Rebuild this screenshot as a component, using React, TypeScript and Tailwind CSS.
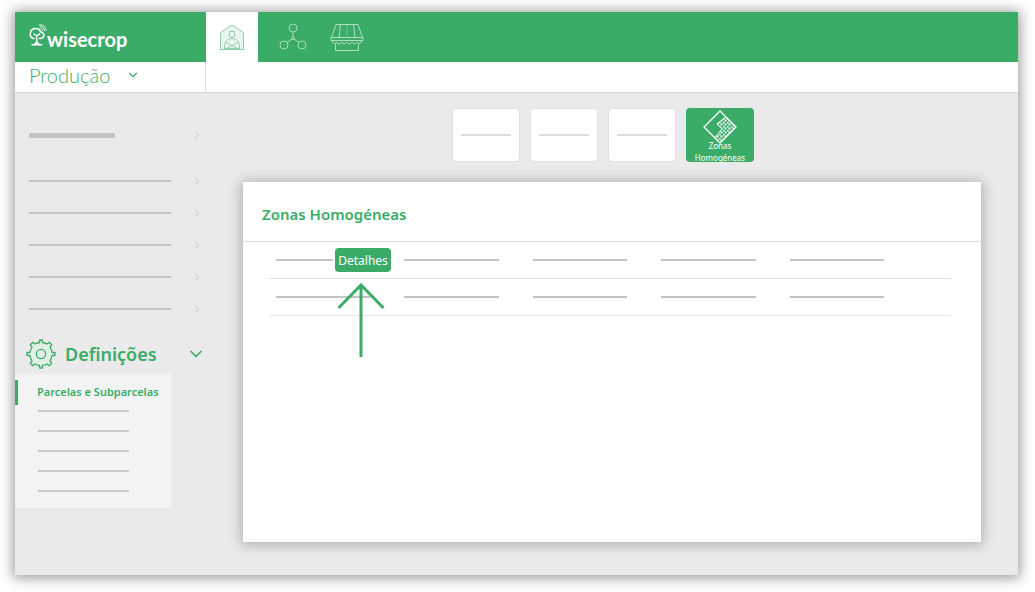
import { ChevronDown, ChevronRight } from 'lucide-react';

const menuRows = [1, 2, 3, 4, 5];
const subRows = [1, 2, 3, 4, 5];
const cards = [1, 2, 3];
const columns = [1, 2, 3, 4, 5];

function Logo() {
  return (
    <a href="#" className="flex items-start text-white" aria-label="wisecrop">
      <svg width="18" height="24" viewBox="0 0 18 24" fill="none" stroke="currentColor" strokeLinecap="round" strokeLinejoin="round">
        <path d="M5 14.500H4C1.800 13.800.6 11.500 1.500 9.200 1.300 6.200 4 4.200 7.300 4.500 9.600 4.700 11.200 6 11.600 7.900 14 8.300 15.300 10 14.800 12 14.300 14 12.500 14.600 10.200 14.400" strokeWidth="1.500" />
        <path d="M5 10L7.700 11.800 10.800 9.800M7.700 11.800V20.400M3 20.700L5.500 20.500 7.700 17.500 10 20.500 12.700 20.700M3 20.700H12.700" strokeWidth="1.400" />
        <path d="M11 3.900C12.600 4 13.800 5.200 13.900 6.800M10.800 2C13.500 2 15.500 4 15.600 6.600M10.700.6C14.500.6 17 3.200 17.200 6.400" strokeWidth=".8" />
      </svg>
      <span className="pt-[3px] font-['Lato'] text-[20px] leading-6 font-bold">wisecrop</span>
    </a>
  );
}

function BarnIcon() {
  return (
    <svg width="24" height="26" viewBox="0 0 24 26" fill="none" stroke="#8fd0a9">
      <path d="M.5 25.500V8.500L12 1l11.500 7.500v17z" fill="#e9f5ee" />
      <path d="M9.500 7.500h5v5q-2.500 2-5 0z" />
      <path d="M4.500 24.500v-3c.5-4 3.500-7 7.500-7s7 3 7.500 7v3M6 18.500l11.500 6M18 18.500l-11.500 6M4 24.500h16" />
    </svg>
  );
}

function NetworkIcon() {
  return (
    <svg width="28" height="28" viewBox="0 0 28 28" fill="none" stroke="#a5dbb9">
      <circle cx="14" cy="5" r="4" />
      <circle cx="5" cy="22" r="4" />
      <circle cx="23" cy="22" r="4" />
      <path d="M14 9v5M12.500 16.500L8 19.500M15.500 16.500l4.500 3M14 13.500l2 3h-4z" />
    </svg>
  );
}

function MarketIcon() {
  return (
    <svg width="34" height="28" viewBox="0 0 34 28" fill="none" stroke="#b0dfc2">
      <path d="M6 1.500h22L32.500 14.500h-31zM10.500 1.500L9 14.500M23.500 1.500L25 14.500" />
      <path d="M17 1.500v13" opacity=".5" />
      <path d="M1 14.500h32v3H1z" />
      <path d="M2 17.500q2 5 5 1.500 1.500 5 5 0 2 4 5 0 2 4 5 0 2 4 5 0 3 3.500 5-1.500M5.500 21v6.500h23V21" />
    </svg>
  );
}

function GearIcon() {
  return (
    <svg width="30" height="30" viewBox="0 0 30 30" fill="#e2f0e4" stroke="#3bac68" strokeWidth="1.300" strokeLinejoin="round">
      <path d="M13.600 1h2.800v2.500Q19 3.800 21 5l2.200-1.700 2.500 2.500L24 8q1.600 2.500 2 5.500h3v3h-3q-.4 3-2 5.500l1.700 2.200-2.500 2.500L21 25q-2 1.200-4.600 1.500V29h-2.800v-2.500Q11 26.200 9 25l-2.200 1.700-2.500-2.500L6 22q-1.600-2.500-2-5.500H1v-3h3Q4.400 10.500 6 8L4.300 5.800l2.500-2.500L9 5q2-1.200 4.600-1.500z" />
      <circle cx="15" cy="15" r="4.600" fill="#eaeaea" />
    </svg>
  );
}

function ZonesIcon() {
  return (
    <svg width="34" height="34" viewBox="0 0 34 34" fill="none" stroke="white" className="shrink-0">
      <defs>
        <pattern id="dots" width="4" height="4" patternUnits="userSpaceOnUse">
          <rect width="1" height="1" fill="white" />
          <rect x="2" y="2" width="1" height="1" fill="white" />
        </pattern>
      </defs>
      <path d="M22.500 7L33 17 17 33l-5-5.500 7-8.500-5-5z" fill="url(#dots)" />
      <path d="M17 1L33 17 17 33 1 17z" strokeWidth="1.300" />
    </svg>
  );
}

function Arrow() {
  return (
    <svg className="absolute top-[35px] left-[61px] z-10" width="48" height="74" viewBox="0 0 48 74" fill="none" stroke="#3bac68" strokeWidth="3">
      <path d="M24 2v72M1.500 25L24 2l22.500 23" />
    </svg>
  );
}

export default function App() {
  return (
    <div className="flex min-h-screen bg-white pt-3 pr-[17px] pb-[17px] pl-[15px] font-['Noto_Sans',sans-serif] text-[#3bac68]">
      <div className="flex flex-1 flex-col bg-[#eaeaea] shadow-[0_1px_12px_2px_rgba(0,0,0,0.4)]">
        <header>
          <div className="flex h-[50px] bg-[#3bac68]">
            <div className="flex w-[191px] items-center pl-[14px]">
              <Logo />
            </div>
            <nav className="flex">
              <button className="flex w-[52px] items-center justify-center bg-white" aria-label="Produção">
                <BarnIcon />
              </button>
              <button className="ml-2 flex w-[54px] items-center justify-center" aria-label="Rede">
                <NetworkIcon />
              </button>
              <button className="flex w-[54px] items-center justify-center" aria-label="Mercado">
                <MarketIcon />
              </button>
            </nav>
          </div>
          <div className="flex h-[31px] border-b border-[#d8d8d8] bg-white">
            <button className="flex w-[191px] items-center gap-4 border-r border-[#dedede] pb-1 pl-[14px]">
              <span className="font-['Lato'] text-[20px] leading-6 font-light">Produção</span>
              <ChevronDown size={14} />
            </button>
          </div>
        </header>

        <div className="flex flex-1">
          <aside className="w-[191px] shrink-0 pt-[34px]">
            <button className="mb-[22px] flex h-4 w-full items-center justify-between pr-[2px] pl-[14px]" aria-label="Menu">
              <span className="h-[5px] w-[86px] bg-[#c3c3c3]" />
              <ChevronRight size={14} strokeWidth={1.5} className="text-[#bdbdbd]" />
            </button>
            {menuRows.map((row) => (
              <button key={row} className="flex h-8 w-full items-center justify-between pr-[2px] pl-[14px]" aria-label={`Menu ${row}`}>
                <span className="h-[2px] w-[142px] bg-[#c3c3c3]" />
                <ChevronRight size={14} strokeWidth={1.5} className="text-[#bdbdbd]" />
              </button>
            ))}

            <button className="mt-[9px] flex h-10 w-full items-center gap-[9px] pl-[11px]">
              <GearIcon />
              <span className="flex-1 text-left text-[18px] leading-6 font-semibold">Definições</span>
              <ChevronDown size={20} />
            </button>
            <div className="mr-[35px] h-[134px] bg-[#f3f3f3] pt-[6px]">
              <a href="#" className="flex h-[25px] items-center border-l-3 border-[#3bac68] pl-[19px] text-[11px] font-semibold whitespace-nowrap">
                Parcelas e Subparcelas
              </a>
              <div className="mt-[5px] flex flex-col gap-[18px] pl-[23px]">
                {subRows.map((row) => (
                  <span key={row} className="h-[2px] w-[91px] bg-[#cacaca]" />
                ))}
              </div>
            </div>
          </aside>

          <main className="flex flex-1 flex-col px-[37px] pt-[15px] pb-[33px]">
            <div className="flex justify-center gap-[10px] pr-[18px]">
              {cards.map((card) => (
                <button key={card} className="flex h-[54px] w-[68px] items-center justify-center rounded border border-[#e0e0e0] bg-white" aria-label={`Atalho ${card}`}>
                  <span className="h-[2px] w-[50px] bg-[#dcdcdc]" />
                </button>
              ))}
              <button className="flex h-[54px] w-[68px] flex-col items-center rounded-sm bg-[#3bac68] pt-[2px] text-[8px] leading-3 text-white">
                <ZonesIcon />
                <span className="-mt-1">Zonas</span>
                <span>Homogéneas</span>
              </button>
            </div>

            <section className="mt-5 flex-1 bg-white shadow-[0_1px_12px_2px_rgba(0,0,0,0.25)]">
              <h1 className="flex h-[60px] items-center border-b border-[#dedede] pt-[6px] pl-[19px] text-[15px] font-semibold">
                Zonas Homogéneas
              </h1>
              <div className="mr-[30px] ml-[26px]">
                <div className="flex h-[37px] items-center gap-[34px] border-b border-[#e4e4e4] pr-[67px] pl-[7px]">
                  <div className="relative flex min-w-0 flex-1 items-center gap-[2px]">
                    <span className="h-[2px] w-[57px] shrink-0 bg-[#c3c3c3]" />
                    <button className="h-6 w-14 shrink-0 rounded-sm bg-[#3bac68] pt-[2px] text-[12px] text-white">Detalhes</button>
                    <Arrow />
                  </div>
                  {columns.slice(1).map((col) => (
                    <span key={col} className="h-[2px] flex-1 bg-[#c3c3c3]" />
                  ))}
                </div>
                <div className="flex h-[37px] items-center gap-[34px] border-b border-[#e4e4e4] pr-[67px] pl-[7px]">
                  {columns.map((col) => (
                    <span key={col} className="h-[2px] flex-1 bg-[#c3c3c3]" />
                  ))}
                </div>
              </div>
            </section>
          </main>
        </div>
      </div>
    </div>
  );
}
